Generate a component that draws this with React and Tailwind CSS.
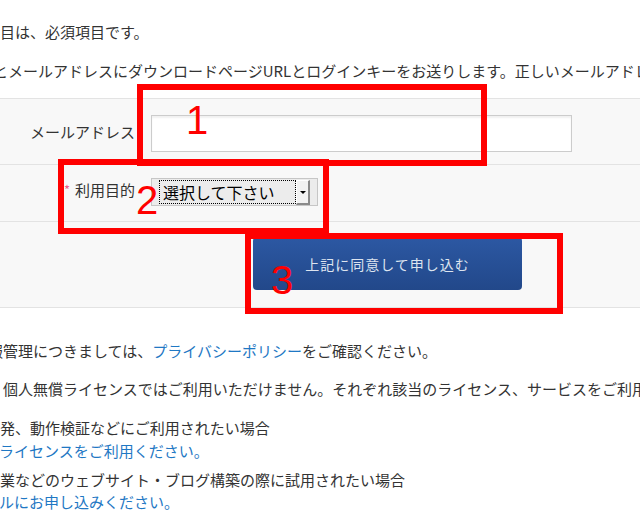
export default function App() {
  return (
    <div className="relative w-[640px] h-[512px] overflow-hidden bg-white text-[15px] leading-[22px] text-[#333] font-['Noto_Sans_CJK_JP','Noto_Sans',sans-serif]">
      <p className="mt-[21px] whitespace-nowrap">目は、必須項目です。</p>
      <p className="mt-[17px] -ml-[7px] whitespace-nowrap">
        とメールアドレスにダウンロードページURLとログインキーをお送りします。正しいメールアドレスをご入力ください。
      </p>

      <div className="mt-[16px] border-y border-[#e3e3e3] bg-[#f8f8f8] divide-y divide-[#e3e3e3]">
        <div className="flex items-center pt-[16px] pb-[12px]">
          <div className="w-[135px] shrink-0 text-right -mt-[4px]">メールアドレス</div>
          <div className="ml-[16px] h-[37px] w-[421px] border border-[#cccccc] bg-white shadow-[inset_0_2px_2px_rgba(0,0,0,0.06)]" />
        </div>

        <div className="flex items-center pt-[13px] pb-[15px]">
          <div className="w-[135px] shrink-0 text-right -mt-[4px] whitespace-nowrap">
            <span className="mr-[5px] align-top text-[13px] text-[#ec5b86]">*</span>
            利用目的
          </div>
          <div className="ml-[16px] flex h-[28px] w-[167px] items-start border border-[#c6c6c6] bg-[#ececec] pl-[7px] pt-[1px]">
            <div className="flex h-[24px] w-[137px] items-center border border-dotted border-black pl-[3px] text-[16px] leading-[20px] text-black">
              選択して下さい
            </div>
            <div className="flex h-[25px] w-[14px] items-center justify-center border-t border-l border-white border-r-2 border-b-2 border-r-[#8a8a8a] border-b-[#8a8a8a] bg-[#f2f2f2]">
              <span className="block h-0 w-0 border-x-[3px] border-t-[3px] border-x-transparent border-t-black" />
            </div>
          </div>
        </div>

        <div className="flex pt-[15px] pb-[17px]">
          <button className="ml-[253px] flex h-[53px] w-[269px] items-center justify-center rounded-[4px] bg-gradient-to-b from-[#2c58a3] to-[#22488a] text-[14px] tracking-[1px] text-[#dde4ef]">
            上記に同意して申し込む
          </button>
        </div>
      </div>

      <p className="mt-[32px] -ml-[12px] whitespace-nowrap">
        報管理につきましては、<span className="text-[#1f78c4]">プライバシーポリシー</span>をご確認ください。
      </p>
      <p className="mt-[16px] ml-[3px] whitespace-nowrap">
        個人無償ライセンスではご利用いただけません。それぞれ該当のライセンス、サービスをご利用ください。
      </p>
      <div className="mt-[16px] leading-[23px] whitespace-nowrap">
        <p>発、動作検証などにご利用されたい場合</p>
        <p className="-ml-[1px] text-[#1f78c4]">ライセンスをご利用ください。</p>
      </div>
      <div className="mt-[7px] whitespace-nowrap">
        <p>業などのウェブサイト・ブログ構築の際に試用されたい場合</p>
        <p className="-ml-[1px] text-[#1f78c4]">ルにお申し込みください。</p>
      </div>

      <div className="absolute left-[137px] top-[84px] h-[82px] w-[350px] border-[6px] border-[#ff0000]" />
      <div className="absolute left-[58px] top-[159px] h-[75px] w-[271px] border-[6px] border-[#ff0000]" />
      <div className="absolute left-[245px] top-[233px] h-[81px] w-[318px] border-[6px] border-[#ff0000]" />
      <span className="absolute left-[186px] top-[100px] font-['Liberation_Sans',sans-serif] text-[40px] leading-[40px] text-[#ff0000]">1</span>
      <span className="absolute left-[136px] top-[180px] font-['Liberation_Sans',sans-serif] text-[40px] leading-[40px] text-[#ff0000]">2</span>
      <span className="absolute left-[271px] top-[260px] font-['Liberation_Sans',sans-serif] text-[40px] leading-[40px] text-[#ff0000]">3</span>
    </div>
  );
}
